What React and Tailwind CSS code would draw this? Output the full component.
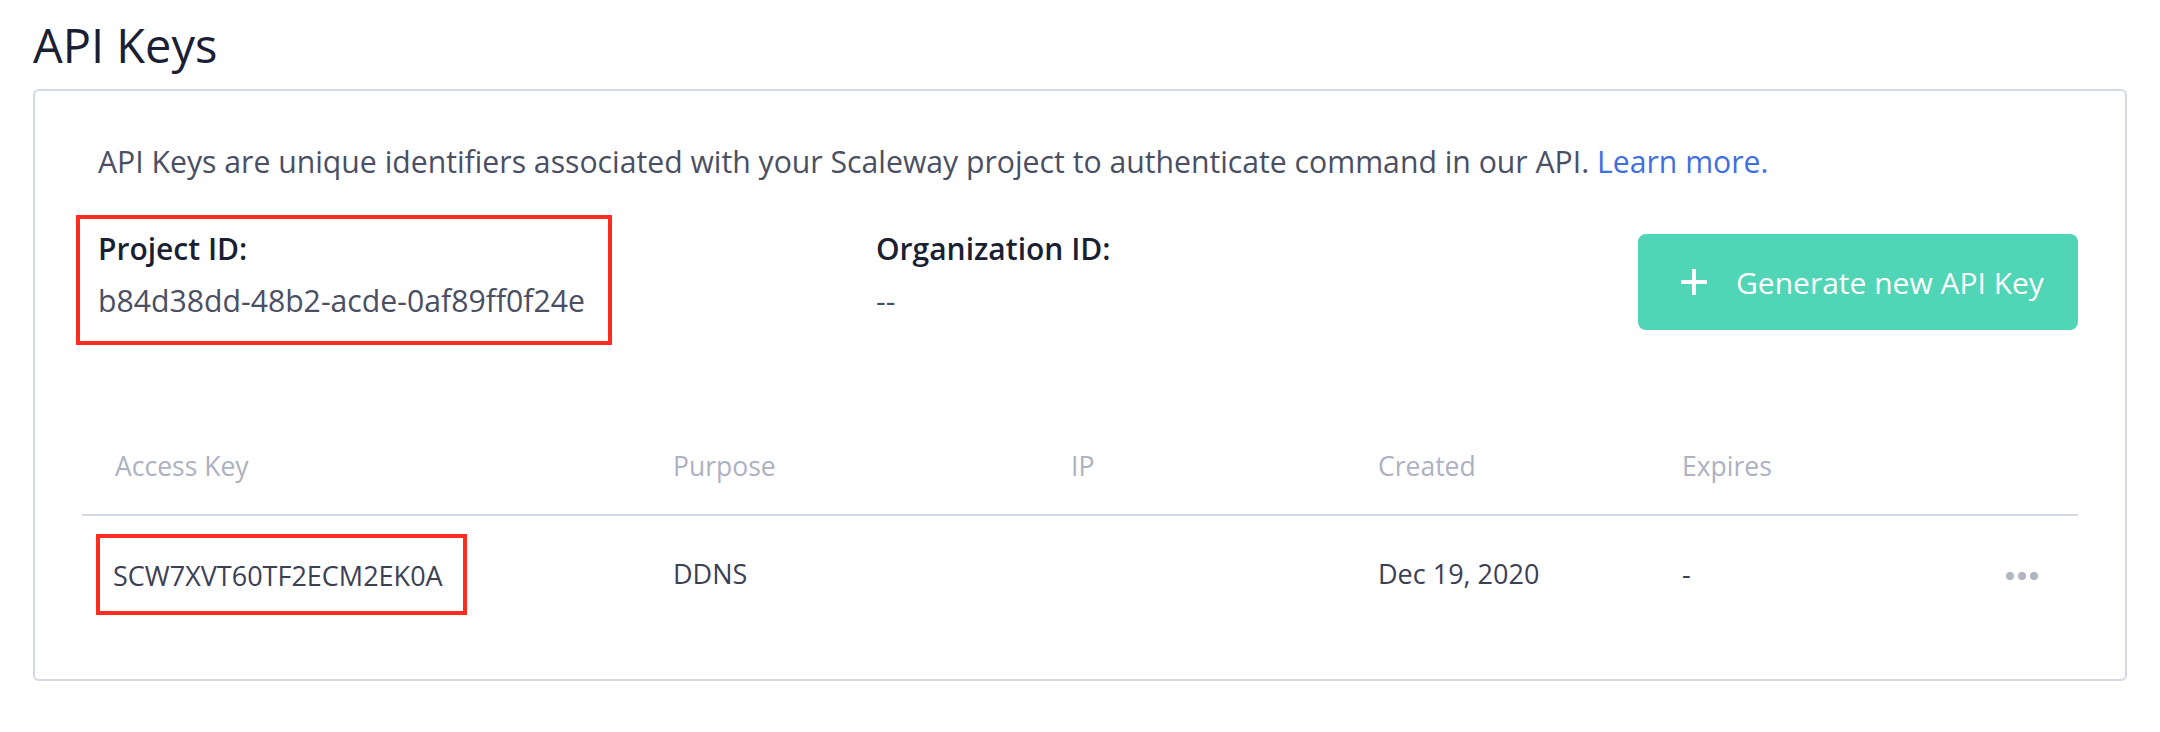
import { useState } from "react";

const columns = ["Access Key", "Purpose", "IP", "Created", "Expires"];

const keys = [
    { access: "SCW7XVT60TF2ECM2EK0A", purpose: "DDNS", ip: "", created: "Dec 19, 2020", expires: "-" },
];

function PlusIcon() {
    return (
        <svg width="28" height="28" viewBox="0 0 28 28" fill="none">
            <path d="M14 1v26M1 14h26" stroke="white" strokeWidth="4" />
        </svg>
    );
}

export default function App() {
    const [rows] = useState(keys);

    return (
        <div className="min-h-[732px] bg-white px-[33px] pt-[17px] font-['Open_Sans','Noto_Sans',sans-serif]">
            <h1 className="text-[47px] leading-[56px] text-[#1b1f35]">API Keys</h1>

            <div className="mt-[16px] rounded-md border-2 border-[#d5d9e6] px-[47px] pt-[51px] pb-[47px]">
                <div className="pl-[16px]">
                    <p className="text-[30.2px] leading-[40px] text-[#4a4f64]">
                        API Keys are unique identifiers associated with your Scaleway project to authenticate command in our API.{" "}
                        <a href="#" className="text-[#3f6fe0]">Learn more.</a>
                    </p>

                    <div className="mt-[33px] grid grid-cols-[778px_1fr_auto]">
                        <div className="-ml-[22px] w-[536px] border-4 border-[#ff2d1f] pl-[18px] pt-[10px] pb-[20px]">
                            <div className="text-[30px] leading-[40px] font-semibold text-[#1a1f33]">Project ID:</div>
                            <div className="mt-[12px] text-[30.2px] leading-[40px] text-[#4a4f64]">b84d38dd-48b2-acde-0af89ff0f24e</div>
                        </div>
                        <div className="pt-[14px]">
                            <div className="text-[30px] leading-[40px] font-semibold text-[#1a1f33]">Organization ID:</div>
                            <div className="mt-[12px] text-[30px] leading-[40px] text-[#4a4f64]">--</div>
                        </div>
                        <button className="mt-[19px] flex h-[96px] w-[440px] items-center gap-[28px] rounded-lg bg-[#50d5b6] pl-[42px] text-[30px] font-medium text-white">
                            <PlusIcon />
                            <span>Generate new API Key</span>
                        </button>
                    </div>
                </div>

                <div className="mt-[103px]">
                    <div className="grid grid-cols-[558px_398px_307px_304px_1fr_auto] border-b-2 border-[#d5d9e6] pb-[30px]">
                        {columns.map((c) => (
                            <div key={c} className="pl-[33px] text-[26.5px] leading-[36px] text-[#adb1c2]">{c}</div>
                        ))}
                        <div></div>
                    </div>
                    {rows.map((r) => (
                        <div key={r.access} className="grid h-[116px] grid-cols-[558px_398px_307px_304px_1fr_auto] items-center text-[27px] leading-[36px] text-[#3c4054]">
                            <div>
                                <span className="ml-[14px] inline-block border-4 border-[#ff2d1f] pl-[13px] pr-[20px] pt-[20px] pb-[17px]">{r.access}</span>
                            </div>
                            <div className="pl-[33px]">{r.purpose}</div>
                            <div className="pl-[33px]">{r.ip}</div>
                            <div className="pl-[33px]">{r.created}</div>
                            <div className="pl-[33px]">{r.expires}</div>
                            <div className="flex gap-[4px] pr-[40px] pt-[4px]">
                                <span className="h-[8px] w-[8px] rounded-full bg-[#b0b4c3]"></span>
                                <span className="h-[8px] w-[8px] rounded-full bg-[#b0b4c3]"></span>
                                <span className="h-[8px] w-[8px] rounded-full bg-[#b0b4c3]"></span>
                            </div>
                        </div>
                    ))}
                </div>
            </div>
        </div>
    );
}
